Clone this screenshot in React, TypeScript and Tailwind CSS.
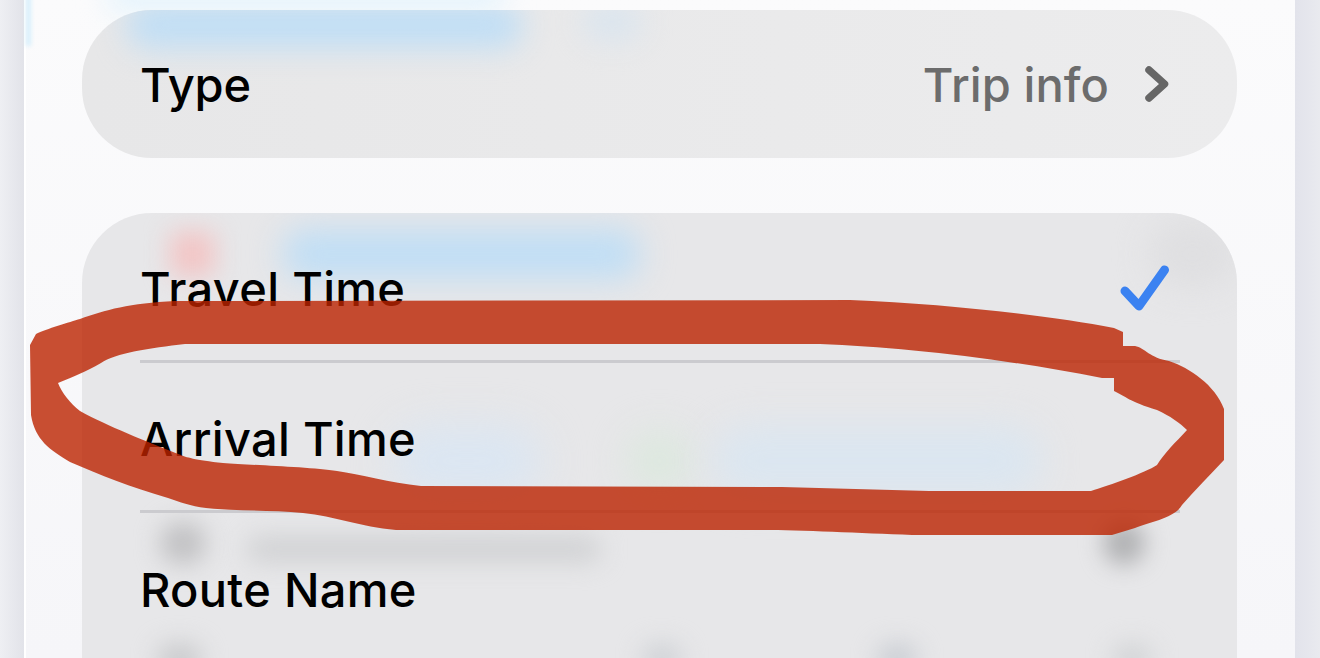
const strokePath =
  "M36 334 C46 329 70 322 80 319 C105 310 130 303 175 301 L850 300 C950 304 1050 316 1114 328 L1123 332 L1123 346 L1135 346 C1145 348 1150 358 1169 361 C1190 368 1215 385 1224 409 L1224 460 C1210 475 1195 490 1182 505 C1175 518 1150 522 1135 528 L1112 535 L912 535 C860 533 800 530 761 530 L396 530 C360 527 335 516 303 513 C270 510 235 511 206 508 C190 506 180 502 168 498 C130 487 100 475 70 462 C50 450 35 440 31 415 L30 345 Z " +
  "M58 383 C75 376 85 372 101 363 C115 353 150 348 185 344 L820 344 C900 347 1000 358 1102 378 L1114 378 L1114 391 C1125 396 1130 402 1157 410 C1170 416 1180 423 1187 430 C1175 443 1165 452 1157 465 C1145 473 1110 485 1091 491 L929 491 L782 487 L421 486 C390 483 360 474 337 471 C310 467 250 465 223 463 C195 460 185 457 181 455 C150 443 105 425 80 411 C70 403 62 393 58 383 Z";

function Row({ label, divider, children }: { label: string; divider?: boolean; children?: React.ReactNode }) {
  return (
    <div className="h-[150px] shrink-0 pl-[58px] pr-[57px]">
      <div className={`flex h-full items-center justify-between pt-[3px] ${divider ? "border-b-[3px] border-[#cbcbcf]" : ""}`}>
        <span className="text-[47px] font-[550] leading-none tracking-[0.3px] text-black">{label}</span>
        {children}
      </div>
    </div>
  );
}

export default function App() {
  return (
    <div className="relative flex h-[658px] w-[1320px] overflow-hidden bg-[#e6e7ee] font-['Inter',sans-serif]">
      <div className="h-full w-[24px] shrink-0 bg-gradient-to-r from-[#eeeff3] to-[#e2e3e9]" />

      <main className="relative h-full w-[1271px] shrink-0 border-l-[2px] border-white bg-gradient-to-b from-[#fbfbfc] to-[#f6f6f9] pl-[56px] pr-[58px] pt-[10px]">
        {/* glow of the blurred list above the card */}
        <div className="absolute inset-x-0 top-[-14px] flex items-start">
          <div className="h-[60px] w-[5px] bg-[#d6effc] blur-[2px]" />
          <div className="ml-[75px] h-[24px] w-[400px] rounded-full bg-[#e0f2fc] blur-[14px]" />
        </div>

        {/* type card */}
        <section className="relative h-[148px] overflow-hidden rounded-[70px] bg-gradient-to-r from-[#e7e7e8] to-[#ececed]">
          <div className="absolute inset-x-0 top-[-8px] flex items-start gap-[60px] pl-[45px]">
            <div className="h-[46px] w-[395px] rounded-[20px] bg-[#c0def5] blur-[15px]" />
            <div className="h-[40px] w-[60px] rounded-full bg-[#dbe5ee] blur-[14px]" />
          </div>
          <div className="relative flex h-full items-center justify-between pl-[58px] pr-[68px]">
            <span className="text-[47px] font-[550] leading-none tracking-[-0.1px] text-black">Type</span>
            <div className="flex items-center gap-[36px]">
              <span className="text-[47px] font-medium leading-none tracking-[0.1px] text-[#6c6c6c]">Trip info</span>
              <svg width="24" height="36" viewBox="0 0 24 36" fill="none" className="shrink-0">
                <path d="M4 4 L19.5 18 L4 32" stroke="#666666" strokeWidth="7.5" strokeLinecap="round" strokeLinejoin="round" />
              </svg>
            </div>
          </div>
        </section>

        {/* options card */}
        <section className="relative mt-[55px] h-[460px] overflow-hidden rounded-t-[70px] bg-[#e7e7e9]">
          {/* blurred list behind the glass */}
          <div className="absolute inset-0 flex flex-col">
            <div className="flex h-[78px] shrink-0 items-center pl-[88px] pt-[4px]">
              <div className="h-[46px] w-[46px] rounded-md bg-[#f2c6c6] blur-[12px]" />
              <div className="ml-[68px] h-[50px] w-[362px] rounded-[20px] bg-[#c0def5] blur-[16px]" />
              <div className="ml-[508px] h-[70px] w-[90px] rounded-full bg-[#dfdfe1] blur-[16px]" />
            </div>
            <div className="mt-[130px] flex h-[80px] shrink-0 items-center pl-[310px]">
              <div className="h-[70px] w-[150px] rounded-full bg-[#dbe6f2] blur-[20px]" />
              <div className="ml-[85px] h-[60px] w-[65px] rounded-full bg-[#dce8de] blur-[18px]" />
              <div className="ml-[20px] h-[70px] w-[330px] rounded-full bg-[#dbe6f0] blur-[18px]" />
            </div>
            <div className="mt-[12px] flex h-[60px] shrink-0 items-center pl-[78px]">
              <div className="h-[42px] w-[46px] rounded-full bg-[#c0c0c2] blur-[12px]" />
              <div className="ml-[40px] mt-[12px] h-[26px] w-[355px] rounded-full bg-[#d0d1d3] blur-[12px]" />
              <div className="ml-[502px] h-[44px] w-[42px] rounded-full bg-[#b0b1b3] blur-[11px]" />
            </div>
            <div className="mt-[66px] flex h-[40px] shrink-0 items-center pl-[75px]">
              <div className="h-[30px] w-[45px] rounded-full bg-[#c8c9cb] blur-[12px]" />
              <div className="ml-[440px] h-[30px] w-[40px] rounded-full bg-[#ced1d5] blur-[12px]" />
              <div className="ml-[195px] h-[30px] w-[40px] rounded-full bg-[#c8ccd2] blur-[12px]" />
              <div className="ml-[195px] h-[30px] w-[40px] rounded-full bg-[#d1d3d5] blur-[12px]" />
            </div>
          </div>

          <div className="relative flex flex-col">
            <Row label="Travel Time" divider>
              <svg width="50" height="48" viewBox="0 0 50 48" fill="none" className="mt-[-1px] mr-[10px] shrink-0">
                <path d="M5 27 L19 42 L44.5 6" stroke="#3b82f1" strokeWidth="9" strokeLinecap="round" strokeLinejoin="round" />
              </svg>
            </Row>
            <Row label="Arrival Time" divider />
            <Row label="Route Name" />
          </div>
        </section>
      </main>

      <div className="h-full flex-1 bg-gradient-to-r from-[#e2e3eb] to-[#e9eaef]" />

      {/* red marker annotation */}
      <svg width="1320" height="658" viewBox="0 0 1320 658" className="pointer-events-none absolute left-0 top-0">
        <path d={strokePath} fill="#bb2300" fillOpacity="0.8" fillRule="evenodd" />
      </svg>
    </div>
  );
}
